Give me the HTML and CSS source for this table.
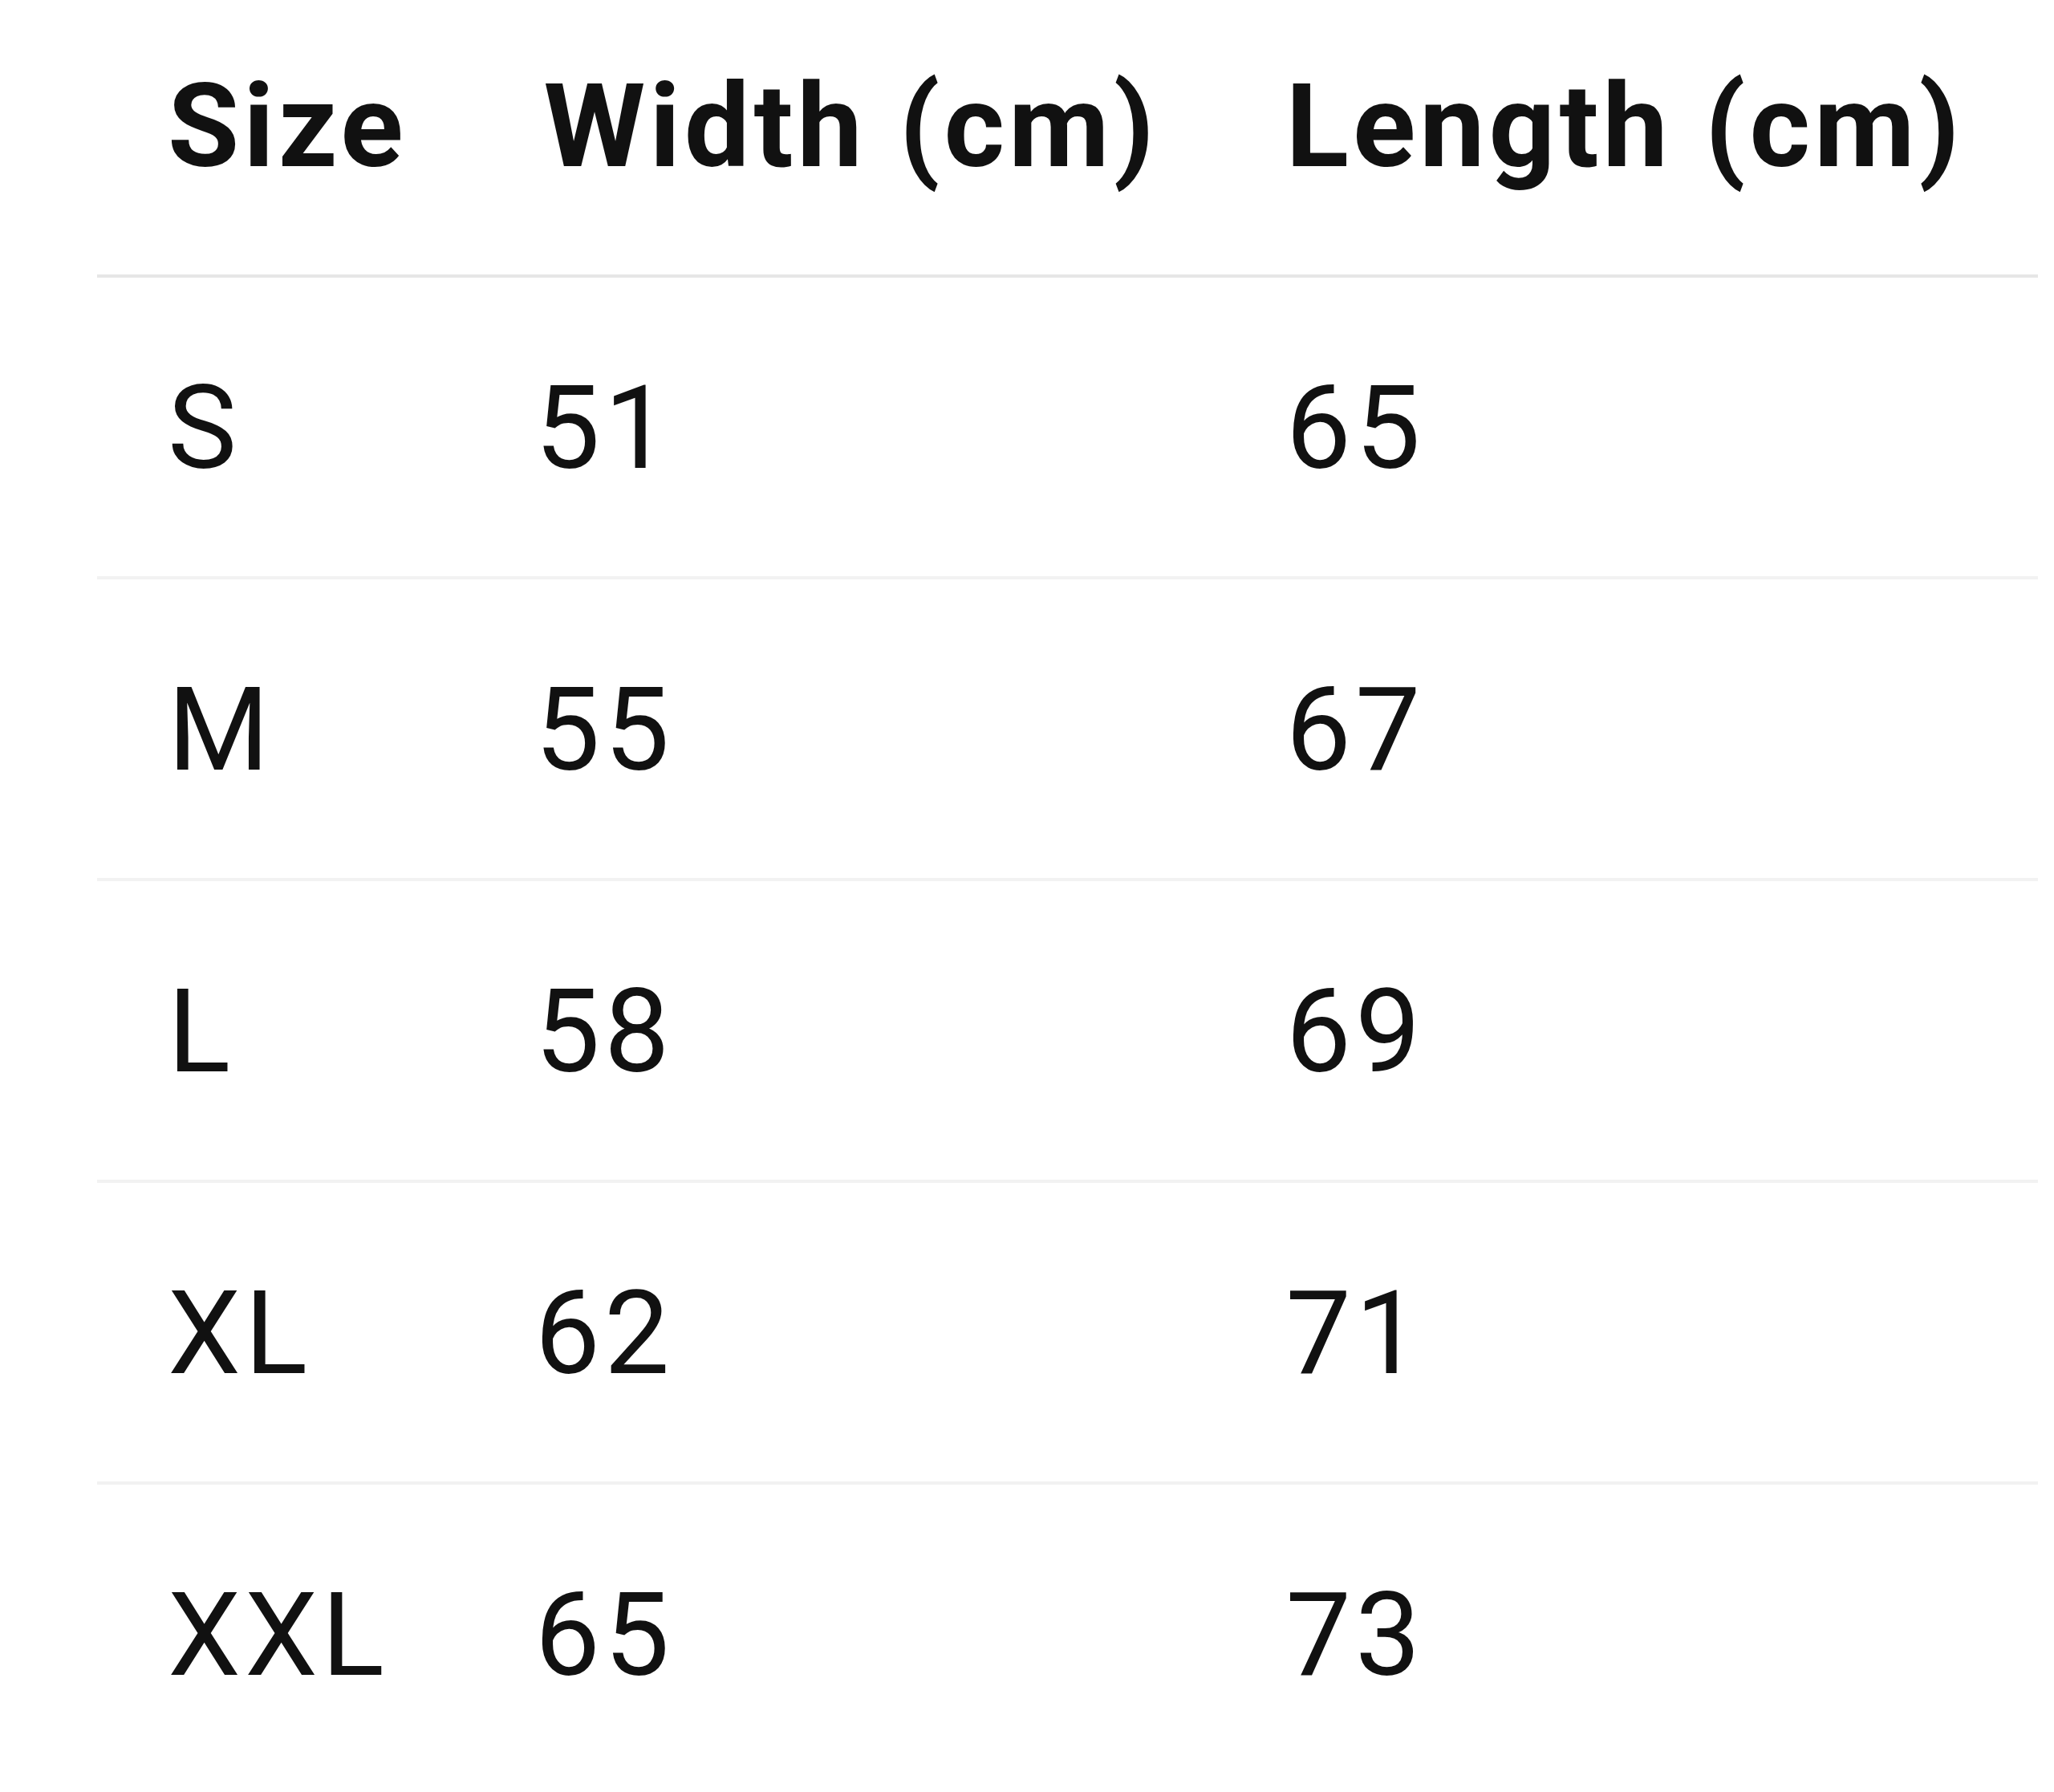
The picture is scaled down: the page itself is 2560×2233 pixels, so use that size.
FILE: index.html
```html
<!DOCTYPE html>
<html lang="en">
<head>
<meta charset="utf-8">
<title>Size chart</title>
<link rel="stylesheet" href="styles.css">
</head>
<body>
<div class="size-table">
  <div class="cell head">Size</div>
  <div class="cell head mid">Width (cm)</div>
  <div class="cell head">Length (cm)</div>

  <div class="cell">S</div>
  <div class="cell mid num">51</div>
  <div class="cell">65</div>

  <div class="cell">M</div>
  <div class="cell mid num">55</div>
  <div class="cell">67</div>

  <div class="cell">L</div>
  <div class="cell mid num">58</div>
  <div class="cell">69</div>

  <div class="cell">XL</div>
  <div class="cell mid num">62</div>
  <div class="cell">71</div>

  <div class="cell last">XXL</div>
  <div class="cell last mid num">65</div>
  <div class="cell last">73</div>
</div>
</body>
</html>
```
FILE: styles.css
```css
html, body {
  margin: 0;
  padding: 0;
  background: #ffffff;
}
body {
  height: 2233px;
  overflow: hidden;
  font-family: Roboto, "Noto Sans", sans-serif;
  color: #111111;
}
.size-table {
  display: grid;
  grid-template-columns: auto auto 1fr;
  margin-left: 121px;
  width: 2419px;
}
.cell {
  font-size: 145px;
  line-height: normal;
  font-weight: 400;
  letter-spacing: 5px;
  padding: 102px 82px 100px 88px;
  border-bottom: 4px solid #f2f2f2;
  white-space: nowrap;
}
.cell.mid {
  padding-right: 71px;
}
.cell.num {
  padding-left: 77px;
}
.cell.head {
  font-weight: 700;
  padding-top: 72px;
  padding-bottom: 100px;
  border-bottom-color: #e6e6e6;
}
.cell.last {
  border-bottom: none;
}
```
